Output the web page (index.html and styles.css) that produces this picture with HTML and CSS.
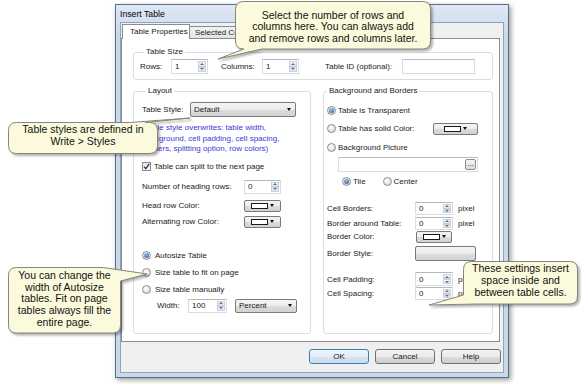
FILE: index.html
```html
<!DOCTYPE html>
<html lang="en">
<head>
    <meta charset="UTF-8">
    <meta name="viewport" content="width=device-width, initial-scale=1.0">
    <title>Insert Table</title>
    <link rel="stylesheet" href="styles.css">
</head>
<body>
<div class="stage">
    <div class="window">
        <div class="titlebar">Insert Table</div>
        <div class="client">
            <div class="tabs">
                <div class="tab tab-active">Table Properties</div>
                <div class="tab">Selected Cells</div>
            </div>

            <div class="panel">
                <fieldset class="group group-size">
                    <legend>Table Size</legend>
                    <div class="row h15 mt2">
                        <span class="lbl w31">Rows:</span>
                        <div class="spin w37"><span class="spin-val">1</span><span class="spin-btns"><i class="spin-up"></i><i class="spin-down"></i></span></div>
                        <span class="lbl w41 ml13">Columns:</span>
                        <div class="spin w37"><span class="spin-val">1</span><span class="spin-btns"><i class="spin-up"></i><i class="spin-down"></i></span></div>
                        <span class="lbl w77 ml26">Table ID (optional):</span>
                        <div class="textbox w73"></div>
                    </div>
                </fieldset>

                <div class="columns">
                    <fieldset class="group group-layout">
                        <legend>Layout</legend>
                        <div class="row h15 mt6">
                            <span class="lbl w48">Table Style:</span>
                            <div class="combo w106"><span class="combo-text">Default</span><i class="caret"></i></div>
                        </div>
                        <p class="note mt6">(Table style overwrites: table width,<br>background, cell padding, cell spacing,<br>borders, splitting option, row colors)</p>
                        <div class="row h12 mt6">
                            <span class="check"><svg width="7" height="7" viewBox="0 0 7 7"><path d="M1 3.6 L2.8 5.6 L6.2 0.8" fill="none" stroke="#23395e" stroke-width="1.3"/></svg></span>
                            <span class="lbl">Table can split to the next page</span>
                        </div>
                        <div class="row h14 mt7">
                            <span class="lbl w102">Number of heading rows:</span>
                            <div class="spin w37"><span class="spin-val">0</span><span class="spin-btns"><i class="spin-up"></i><i class="spin-down"></i></span></div>
                        </div>
                        <div class="row h14 mt5">
                            <span class="lbl w102">Head row Color:</span>
                            <div class="color-btn w37"><span class="swatch"></span><i class="caret"></i></div>
                        </div>
                        <div class="row h14 mt2">
                            <span class="lbl w102">Alternating row Color:</span>
                            <div class="color-btn w37"><span class="swatch"></span><i class="caret"></i></div>
                        </div>
                        <div class="row h12 mt21"><span class="radio radio-on"></span><span class="lbl">Autosize Table</span></div>
                        <div class="row h12 mt5"><span class="radio"></span><span class="lbl">Size table to fit on page</span></div>
                        <div class="row h12 mt5"><span class="radio"></span><span class="lbl">Size table manually</span></div>
                        <div class="row h14 mt3 indent">
                            <span class="lbl w31">Width:</span>
                            <div class="spin w39"><span class="spin-val">100</span><span class="spin-btns"><i class="spin-up"></i><i class="spin-down"></i></span></div>
                            <div class="combo w62 ml8"><span class="combo-text">Percent</span><i class="caret"></i></div>
                        </div>
                    </fieldset>

                    <fieldset class="group group-bg">
                        <legend>Background and Borders</legend>
                        <div class="row h12 mt8"><span class="radio radio-on"></span><span class="lbl">Table is Transparent</span></div>
                        <div class="row h13 mt6">
                            <span class="radio"></span><span class="lbl">Table has solid Color:</span>
                            <div class="color-btn w45 push"><span class="swatch"></span><i class="caret"></i></div>
                        </div>
                        <div class="row h12 mt6"><span class="radio"></span><span class="lbl">Background Picture</span></div>
                        <div class="row h15 mt4">
                            <div class="textbox pathbox w142 ml11"><span class="dots">...</span></div>
                        </div>
                        <div class="row h12 mt3 ml15">
                            <span class="radio radio-on"></span><span class="lbl tile-lbl">Tile</span>
                            <span class="radio"></span><span class="lbl">Center</span>
                        </div>
                        <div class="row h13 mt15">
                            <span class="lbl w88">Cell Borders:</span>
                            <div class="spin w38"><span class="spin-val">0</span><span class="spin-btns"><i class="spin-up"></i><i class="spin-down"></i></span></div>
                            <span class="lbl ml5">pixel</span>
                        </div>
                        <div class="row h13 mt2">
                            <span class="lbl w88">Border around Table:</span>
                            <div class="spin w38"><span class="spin-val">0</span><span class="spin-btns"><i class="spin-up"></i><i class="spin-down"></i></span></div>
                            <span class="lbl ml5">pixel</span>
                        </div>
                        <div class="row h11 mt1">
                            <span class="lbl w89">Border Color:</span>
                            <div class="color-btn w36"><span class="swatch"></span><i class="caret"></i></div>
                        </div>
                        <div class="row h15 mt4">
                            <span class="lbl w88">Border Style:</span>
                            <div class="combo w61"></div>
                        </div>
                        <div class="row h14 mt11">
                            <span class="lbl w88">Cell Padding:</span>
                            <div class="spin w38"><span class="spin-val">0</span><span class="spin-btns"><i class="spin-up"></i><i class="spin-down"></i></span></div>
                            <span class="lbl ml5">pixel</span>
                        </div>
                        <div class="row h13 mt1">
                            <span class="lbl w88">Cell Spacing:</span>
                            <div class="spin w38"><span class="spin-val">0</span><span class="spin-btns"><i class="spin-up"></i><i class="spin-down"></i></span></div>
                            <span class="lbl ml5">pixel</span>
                        </div>
                    </fieldset>
                </div>
            </div>

            <div class="actions">
                <button class="btn btn-default">OK</button>
                <button class="btn">Cancel</button>
                <button class="btn">Help</button>
            </div>
        </div>
    </div>

    <!-- callouts laid over the dialog -->
    <div class="callout callout-rows">
        <svg class="bubble" width="225" height="64"><path d="M31.5,1.5 H210.5 Q218.5,1.5 218.5,9.5 V41 Q218.5,49 210.5,49 H50 L6,59 L32,49 H31.5 Q23.5,49 23.5,41 V9.5 Q23.5,1.5 31.5,1.5 Z"/></svg>
        <div class="callout-text">Select the number of rows and<br>columns here. You can always add<br>and remove rows and columns later.</div>
    </div>

    <div class="callout callout-styles">
        <svg class="bubble" width="190" height="44"><path d="M11.5,8.5 H125 L185,4 L140,8.5 H144.5 Q152.5,8.5 152.5,16.5 V31.5 Q152.5,39.5 144.5,39.5 H11.5 Q3.5,39.5 3.5,31.5 V16.5 Q3.5,8.5 11.5,8.5 Z"/></svg>
        <div class="callout-text">Table styles are defined in<br>Write &gt; Styles</div>
    </div>

    <div class="callout callout-size">
        <svg class="bubble" width="146" height="74"><path d="M11.5,4.5 H98 L142,11 L115.5,18 V62 Q115.5,70 107.5,70 H11.5 Q3.5,70 3.5,62 V12.5 Q3.5,4.5 11.5,4.5 Z"/></svg>
        <div class="callout-text">You can change the<br>width of Autosize<br>tables. Fit on page<br>tables always fill the<br>entire page.</div>
    </div>

    <div class="callout callout-spacing">
        <svg class="bubble" width="158" height="52"><path d="M46.5,4.5 H144.5 Q152.5,4.5 152.5,12.5 V39 Q152.5,47 144.5,47 H52 L4,48 L38.5,38 V12.5 Q38.5,4.5 46.5,4.5 Z"/></svg>
        <div class="callout-text">These settings insert<br>space inside and<br>between table cells.</div>
    </div>
</div>
</body>
</html>
```

FILE: styles.css
```css
* {
    margin: 0;
    padding: 0;
    box-sizing: border-box;
}

body {
    background: #fff;
    font-family: "Liberation Sans", Arial, sans-serif;
    font-size: 8px;
    color: #1a1a1a;
}

.stage {
    position: relative;
    width: 585px;
    height: 384px;
    padding: 4px 0 0 115px;
    overflow: hidden;
}

/* window chrome */
.window {
    width: 394px;
    height: 374px;
    display: flex;
    flex-direction: column;
    border: 1px solid #566d8c;
    padding: 0 4px 4px;
    background: linear-gradient(#dfe8f4, #cbd9eb 30px, #cbd9eb);
    box-shadow: 2px 2px 5px rgba(0, 0, 0, 0.4);
}

.titlebar {
    height: 17px;
    line-height: 19px;
    font-size: 8.7px;
    color: #000;
}

.client {
    flex: 1;
    display: flex;
    flex-direction: column;
    background: #f0f0f0;
    border: 1px solid #8fa2ba;
    padding-top: 1px;
}

.tabs {
    display: flex;
    align-items: flex-end;
    height: 14px;
    padding-left: 1px;
}

.tab {
    height: 12px;
    line-height: 11px;
    padding: 0 5px;
    white-space: nowrap;
    border: 1px solid #898c95;
    border-bottom: none;
    border-left: none;
    background: linear-gradient(#f2f2f2, #e3e3e3);
}

.tab-active {
    position: relative;
    z-index: 1;
    width: 68px;
    height: 15px;
    line-height: 13px;
    margin-bottom: -1px;
    padding: 0 0 0 7px;
    border-left: 1px solid #898c95;
    background: #fff;
}

.panel {
    margin-right: 3px;
    padding: 8px 6px 7px 11px;
    background: #fff;
    border: 1px solid #898c95;
}

/* group boxes */
.group {
    margin: 0;
    padding: 0;
    min-width: 0;
    border: 1px solid #d5dfe5;
    border-radius: 3px;
}

.group legend {
    padding: 0 2px;
    margin-left: 4px;
    line-height: 10px;
}

.group-size {
    padding: 0 0 5px 6px;
}

.columns {
    display: flex;
    gap: 12px;
    margin-top: 6px;
}

.group-layout {
    width: 178px;
    flex: none;
    padding: 0 0 20px 8px;
}

.group-bg {
    flex: 1;
    padding: 0 14px 0 3px;
}

.group-bg legend {
    margin-left: 0;
}

/* rows */
.row {
    display: flex;
    align-items: center;
}

.lbl {
    flex: none;
    white-space: nowrap;
}

.note {
    color: #3a3ad6;
    line-height: 10.5px;
}

.h11 { height: 11px; }
.h12 { height: 12px; }
.h13 { height: 13px; }
.h14 { height: 14px; }
.h15 { height: 15px; }

.mt1 { margin-top: 1px; }
.mt2 { margin-top: 2px; }
.mt3 { margin-top: 3px; }
.mt4 { margin-top: 4px; }
.mt5 { margin-top: 5px; }
.mt6 { margin-top: 6px; }
.mt7 { margin-top: 7px; }
.mt8 { margin-top: 8px; }
.mt11 { margin-top: 11px; }
.mt15 { margin-top: 15px; }
.mt21 { margin-top: 21px; }

.ml5 { margin-left: 5px; }
.ml8 { margin-left: 8px; }
.ml11 { margin-left: 11px; }
.ml13 { margin-left: 13px; }
.ml15 { margin-left: 15px; }
.ml26 { margin-left: 26px; }
.indent { margin-left: 15px; }
.push { margin-left: auto; }

.w31 { width: 31px; }
.w36 { width: 36px; }
.w37 { width: 37px; }
.w38 { width: 38px; }
.w39 { width: 39px; }
.w41 { width: 41px; }
.w45 { width: 45px; }
.w48 { width: 48px; }
.w61 { width: 61px; }
.w62 { width: 62px; }
.w73 { width: 73px; }
.w77 { width: 77px; }
.w88 { width: 88px; }
.w89 { width: 89px; }
.w102 { width: 102px; }
.w106 { width: 106px; }
.w142 { width: 142px; }

/* controls */
.spin {
    display: flex;
    height: 100%;
    background: #fff;
    border: 1px solid #d9dde3;
    border-top-color: #b3b8c0;
}

.spin-val {
    flex: 1;
    padding-left: 3px;
    align-self: center;
}

.spin-btns {
    width: 8px;
    display: flex;
    flex-direction: column;
    margin: 1px 1px 1px 0;
}

.spin-btns i {
    flex: 1;
    display: flex;
    align-items: center;
    justify-content: center;
    border: 1px solid #c9d0da;
    background: linear-gradient(#f4f7fa, #dde4ec);
}

.spin-up::after,
.spin-down::after {
    content: "";
    border-left: 2px solid transparent;
    border-right: 2px solid transparent;
}

.spin-up::after { border-bottom: 2px solid #5b6f8e; }
.spin-down::after { border-top: 2px solid #5b6f8e; }

.textbox {
    height: 100%;
    background: #fff;
    border: 1px solid #d9dde3;
    border-top-color: #b9bec6;
}

.pathbox {
    display: flex;
    align-items: center;
    justify-content: flex-end;
    padding-right: 1px;
}

.dots {
    width: 11px;
    height: 11px;
    line-height: 8px;
    text-align: center;
    border: 1px solid #8e8f8f;
    border-radius: 2px;
    background: linear-gradient(#f4f4f4, #d9d9d9);
}

.combo,
.color-btn {
    height: 100%;
    display: flex;
    align-items: center;
    border: 1px solid #7a7a7a;
    border-radius: 2px;
    background: linear-gradient(#f4f4f4 0%, #ebebeb 50%, #dcdcdc 51%, #d2d2d2 100%);
}

.combo {
    justify-content: space-between;
    padding: 0 4px 0 3px;
}

.color-btn {
    height: 12px;
    justify-content: center;
    gap: 2px;
}

.swatch {
    width: 17px;
    height: 6px;
    background: #fff;
    border: 1px solid #1a1a1a;
}

.caret {
    border-left: 2.5px solid transparent;
    border-right: 2.5px solid transparent;
    border-top: 3px solid #111;
}

.radio {
    flex: none;
    width: 9px;
    height: 9px;
    margin-right: 4px;
    border-radius: 50%;
    border: 1px solid #8c8c8c;
    background: radial-gradient(circle at 40% 35%, #fff, #d0d0d0);
}

.radio-on::after {
    content: "";
    display: block;
    width: 5px;
    height: 5px;
    margin: 1px;
    border-radius: 50%;
    background: radial-gradient(circle at 40% 35%, #9bc4ec, #1d4f94);
}

.group-bg .radio {
    margin-right: 2px;
}

.tile-lbl {
    margin-right: 17px;
}

.check {
    flex: none;
    width: 9px;
    height: 9px;
    margin-right: 3px;
    display: flex;
    align-items: center;
    justify-content: center;
    border: 1px solid #8c8c8c;
    background: linear-gradient(#e8e8e8, #fbfbfb);
}

.check svg {
    display: block;
}

/* dialog buttons */
.actions {
    display: flex;
    justify-content: flex-end;
    gap: 6px;
    margin-top: 7px;
    padding-right: 2px;
}

.btn {
    width: 60px;
    height: 15px;
    font-family: inherit;
    font-size: 8px;
    color: #1a1a1a;
    border: 1px solid #707070;
    border-radius: 3px;
    background: linear-gradient(#f2f2f2 0%, #ebebeb 50%, #dddddd 51%, #cfcfcf 100%);
}

.btn-default {
    border-color: #3c7fb1;
    background: linear-gradient(#eef5fb 0%, #e3eef8 50%, #d6e5f2 51%, #cbdcec 100%);
}

/* callouts */
.callout {
    position: absolute;
    font-size: 10.5px;
    color: #111;
    text-align: center;
}

.bubble {
    position: absolute;
    left: 0;
    top: 0;
    filter: drop-shadow(2px 2px 1px rgba(0, 0, 0, 0.3));
}

.bubble path {
    fill: #fcfadc;
    stroke: #85857a;
    stroke-width: 1;
}

.callout-text {
    position: relative;
}

.callout-rows {
    left: 212px;
    top: 0;
    width: 225px;
    height: 64px;
}

.callout-rows .callout-text {
    margin: 9.5px 0 0 23px;
    width: 196px;
    line-height: 11.5px;
}

.callout-styles {
    left: 5px;
    top: 114px;
    width: 190px;
    height: 44px;
}

.callout-styles .callout-text {
    margin: 9px 0 0 3px;
    width: 150px;
    line-height: 12.3px;
}

.callout-size {
    left: 5px;
    top: 263px;
    width: 146px;
    height: 74px;
}

.callout-size .callout-text {
    margin: 6.8px 0 0 3px;
    width: 113px;
    line-height: 11.8px;
}

.callout-spacing {
    left: 425px;
    top: 257px;
    width: 158px;
    height: 52px;
}

.callout-spacing .callout-text {
    margin: 6.3px 0 0 38px;
    width: 115px;
    line-height: 11.8px;
}
```
